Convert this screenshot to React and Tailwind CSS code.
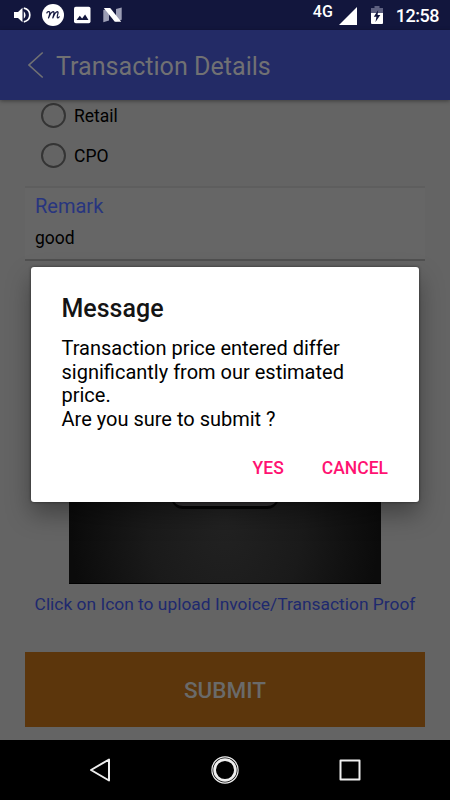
import React, { useState } from 'react';

const options = ['Retail', 'CPO'];

const StatusBar = () => {
    return (
        <div className="flex h-[30px] shrink-0 items-center justify-between bg-[#12163d] pl-[14px] pr-[11px] text-white">
            <div className="flex items-center">
                <svg className="h-[18px] w-[18px]" viewBox="0 0 18 18" fill="none">
                    <path d="M0 6h4L8.500 1.800v14.400L4 12H0z" fill="#fff" />
                    <path d="M9.800 5.200q3.600 3.800 0 7.600z" fill="#fff" />
                    <path d="M9.800 2.200q6 1.300 6 6.800t-6 6.800" stroke="#fff" strokeWidth="1.700" />
                </svg>
                <div className="ml-[10px] flex h-[22px] w-[22px] items-center justify-center rounded-full bg-white">
                    <svg className="h-[10px] w-[14px]" viewBox="0 0 14 10" fill="none" stroke="#12163d" strokeWidth="1.200" strokeLinecap="round" strokeLinejoin="round">
                        <path d="M.8 3C1.300 1.400 3.800 .9 3.800 2.700 3.800 4.700 2.900 6.500 2.500 8 3.700 4.800 5.600 1.600 7.300 1.600 8.900 1.800 7.500 5 6.800 8 8 4.800 9.800 1.600 11.400 1.600c1.900.2-.9 4.800 0 6 .5.600 1.300.1 1.800-.8" />
                    </svg>
                </div>
                <svg className="ml-[10px] h-[18px] w-[17px]" viewBox="0 0 17 18">
                    <rect x="0" y="0.800" width="16.500" height="16.500" rx="1.800" fill="#fff" />
                    <path d="M2.500 14l3.300-4.300 2.300 2.800 3-3.900 3.400 5.400z" fill="#12163d" />
                </svg>
                <svg className="ml-[12px] h-[16px] w-[19px]" viewBox="0 0 19 16">
                    <path d="M.3 3L6 1.500v12L.3 15.200zM13 2L18.700.5v12.200L13 14.500z" fill="#9c9eb5" />
                    <path d="M.8 1h6.400L18.200 14.800h-6.400z" fill="#fff" />
                </svg>
            </div>
            <div className="flex h-full items-center">
                <span className="-mt-[7px] text-[16px] font-medium leading-none">4G</span>
                <svg className="ml-[6px] mt-[2px] h-[18px] w-[18px]" viewBox="0 0 18 18">
                    <path d="M0 18L18 0v18z" fill="#fff" />
                </svg>
                <svg className="ml-[14px] h-[18px] w-[12px]" viewBox="0 0 12 18">
                    <path d="M0 2h3.500V0h5v2H12v6H0z" fill="#5d6080" />
                    <path d="M0 7h12v10q0 1-1 1H1q-1 0-1-1z" fill="#fff" />
                    <path d="M7.200 4L2.800 10.800h2.600L4.500 16 9.300 9H6.600z" fill="#12163d" />
                </svg>
                <span className="ml-[13px] mt-px text-[18px] font-medium leading-none tracking-[-0.5px]">12:58</span>
            </div>
        </div>
    );
};

const Header = () => {
    return (
        <div className="z-10 flex h-[70px] shrink-0 items-center bg-[#232b66] pl-[28px] text-[#717173] shadow-[0_1px_4px_rgba(0,0,0,0.4)]">
            <svg className="h-[28px] w-[16px]" viewBox="0 0 16 28" fill="none" stroke="currentColor" strokeWidth="1.600">
                <path d="M14.700 1.500L1 14l13.700 12.500" />
            </svg>
            <h1 className="ml-[12px] mt-[3px] text-[25.100px] leading-none">Transaction Details</h1>
        </div>
    );
};

const NavigationBar = () => {
    return (
        <div className="flex h-[60px] shrink-0 items-center justify-center bg-black">
            <div className="flex w-[375px] items-center justify-around">
                <svg className="h-[28px] w-[28px]" viewBox="0 0 28 28" fill="none" stroke="#eee" strokeWidth="2" strokeLinejoin="round">
                    <path d="M23 3.500v21L5 14z" />
                </svg>
                <svg className="h-[28px] w-[28px]" viewBox="0 0 28 28" fill="none" stroke="#eee">
                    <circle cx="14" cy="14" r="13.100" strokeWidth="1.200" />
                    <circle cx="14" cy="14" r="10.400" strokeWidth="2.700" />
                </svg>
                <svg className="h-[28px] w-[28px]" viewBox="0 0 28 28" fill="none" stroke="#eee" strokeWidth="2" strokeLinejoin="round">
                    <rect x="4.500" y="4.500" width="19" height="19" />
                </svg>
            </div>
        </div>
    );
};

const MessageDialog = ({ onClose }) => {
    return (
        <div className="absolute left-[31px] top-[267px] z-20 flex h-[235px] w-[388px] flex-col rounded-[3px] bg-white pl-[30.500px] pr-[31px] pt-[27px] shadow-[0_12px_24px_rgba(0,0,0,0.35),0_0_3px_rgba(0,0,0,0.5)]">
            <h2 className="text-[25px] font-medium leading-[30px] text-[#141414]">Message</h2>
            <p className="mt-[13px] text-[20px] leading-[23.500px] text-black">
                Transaction price entered differ<br />
                significantly from our estimated<br />
                price.<br />
                Are you sure to submit ?
            </p>
            <div className="mt-[25px] flex justify-end gap-[38px] text-[17.500px] font-medium leading-[24px] text-[#ff1272]">
                <button onClick={onClose}>YES</button>
                <button onClick={onClose}>CANCEL</button>
            </div>
        </div>
    );
};

const App = () => {
    const [dialogOpen, setDialogOpen] = useState(true);

    return (
        <div className="relative flex h-[800px] w-[450px] flex-col overflow-hidden bg-[#646464] font-[Roboto,sans-serif]">
            <StatusBar />
            <Header />
            <div className="flex flex-1 flex-col px-[25px] pt-[3px]">
                <div className="flex flex-col gap-[15px] pl-[16px]">
                    {options.map((option) => (
                        <div key={option} className="flex h-[25px] items-center gap-[8px]">
                            <div className="h-[25px] w-[25px] rounded-full border-[2.500px] border-[#343434]"></div>
                            <span className="mt-[2px] text-[17.500px] leading-none text-black">{option}</span>
                        </div>
                    ))}
                </div>
                <div className="mt-[18px] flex h-[75px] flex-col border-b-2 border-t-2 border-b-[#505050] border-t-[#5e5e5e] bg-[#666] pl-[10px]">
                    <span className="mt-[6px] text-[20px] leading-[25px] text-[#28357f]">Remark</span>
                    <span className="mt-[8px] text-[17.500px] leading-[22px] text-black">good</span>
                </div>
                <div className="mx-[44px] mt-[28px] flex h-[295px] flex-col items-center border-b border-black bg-[radial-gradient(ellipse_at_50%_78%,#222222_0%,#1a1a1a_35%,#0b0b0b_70%)]">
                    <svg className="mt-[40px] h-[183px] w-[116px]" viewBox="0 0 116 183">
                        <path d="M4 2v169q4 9 12 9h84q8 0 12-9V2z" fill="#050505" />
                        <path d="M4 0v168q4 9 12 9h84q8 0 12-9V0z" fill="#363436" />
                    </svg>
                </div>
                <p className="mt-[8px] whitespace-nowrap text-center text-[17.400px] leading-[24px] text-[#1e296e]">
                    Click on Icon to upload Invoice/Transaction Proof
                </p>
                <button
                    className="mt-[36px] h-[75px] w-full bg-[#5c360c] pt-[3px] text-[22.500px] font-medium text-[#6a6a6a]"
                    onClick={() => setDialogOpen(true)}
                >
                    SUBMIT
                </button>
            </div>
            <NavigationBar />
            {dialogOpen && <MessageDialog onClose={() => setDialogOpen(false)} />}
        </div>
    );
};

export default App;
